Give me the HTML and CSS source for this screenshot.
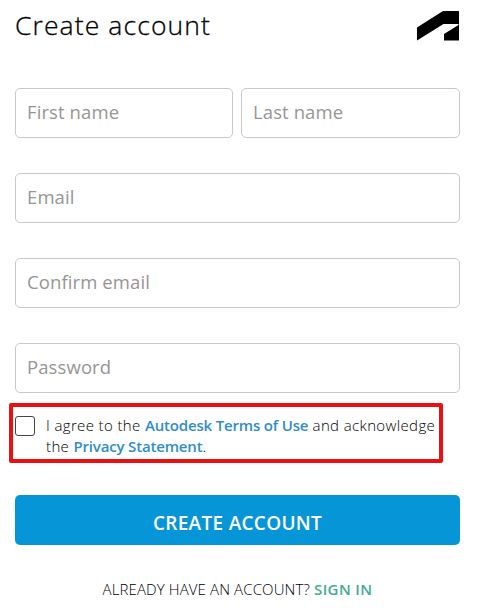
FILE: index.html
```
<!DOCTYPE html>
<html lang="en">
<head>
<meta charset="utf-8">
<title>Create account</title>
<link rel="stylesheet" href="styles.css">
</head>
<body>
<main class="page">
  <header class="header">
    <h1 class="title">Create account</h1>
    <svg class="logo" width="42" height="30" viewBox="0 0 42 30" aria-hidden="true"><path d="M0 16.5 26 0H41.5Q42 0 42 .5V29.5H27V23L41.5 14V13H26.5L0 29.5Z"/></svg>
  </header>
  <form class="form">
    <div class="row">
      <input class="field" type="text" placeholder="First name" aria-label="First name">
      <input class="field" type="text" placeholder="Last name" aria-label="Last name">
    </div>
    <input class="field" type="text" placeholder="Email" aria-label="Email">
    <input class="field" type="text" placeholder="Confirm email" aria-label="Confirm email">
    <input class="field" type="password" placeholder="Password" aria-label="Password">
    <div class="terms">
      <input class="checkbox" type="checkbox" id="agree">
      <label class="terms-text" for="agree"><span class="line">I agree to the <a class="link">Autodesk Terms of Use</a> and acknowledge</span><span class="line">the <a class="link">Privacy Statement</a>.</span></label>
    </div>
    <button class="submit" type="button">CREATE ACCOUNT</button>
  </form>
  <p class="signin">ALREADY HAVE AN ACCOUNT? <a class="signin-link">SIGN IN</a></p>
</main>
</body>
</html>
```
FILE: styles.css
```
* { box-sizing: border-box; }
body {
  margin: 0;
  background: #fff;
  font-family: "Open Sans", "Noto Sans", sans-serif;
  color: #000;
}
.page { padding: 11px 20px 0 15px; }
.header { display: flex; justify-content: space-between; height: 77px; }
.title {
  margin: -1px 0 0;
  font-size: 26.5px;
  font-weight: 300;
  line-height: 30px;
  letter-spacing: 1.1px;
  -webkit-text-stroke: 0.3px #000;
  white-space: nowrap;
}
.logo { fill: #000; margin-right: 1px; flex: none; }
.form { display: flex; flex-direction: column; gap: 35px; }
.row { display: grid; grid-template-columns: 218px 219px; gap: 8px; }
.field {
  width: 100%;
  height: 50px;
  padding: 0 11px 3px;
  border: 1px solid #c8c8c8;
  border-radius: 5px;
  background: #fff;
  font: 400 18.5px/28px "Open Sans", "Noto Sans", sans-serif;
  letter-spacing: 0.1px;
}
.field::placeholder { color: #959595; opacity: 1; }
.terms {
  display: flex;
  gap: 11px;
  width: 434px;
  height: 60px;
  margin: -25px 0 -3px -6px;
  padding: 8px 0 0 2px;
  border: 4px solid #e81010;
  border-radius: 2px;
}
.checkbox {
  appearance: none;
  flex: none;
  width: 20px;
  height: 20px;
  margin: 1px 0 0;
  border: 1.5px solid #444;
  border-radius: 3px;
}
.terms-text {
  font-size: 15px;
  font-weight: 300;
  line-height: 21px;
  letter-spacing: 0.37px;
}
.line { display: block; white-space: nowrap; }
.link { color: #2f8dc7; font-weight: 600; letter-spacing: -0.17px; }
.submit {
  height: 50px;
  padding: 5px 0 0;
  border: 0;
  border-radius: 5px;
  background: #0696d7;
  color: #fff;
  font: 600 19px/28px "Open Sans", "Noto Sans", sans-serif;
  letter-spacing: 0.3px;
}
.signin {
  margin: 34px 0 0;
  text-align: center;
  font-size: 15px;
  font-weight: 300;
  line-height: 20px;
  letter-spacing: 0.12px;
}
.signin-link { color: #43ab94; font-weight: 600; letter-spacing: 0.4px; }
```
